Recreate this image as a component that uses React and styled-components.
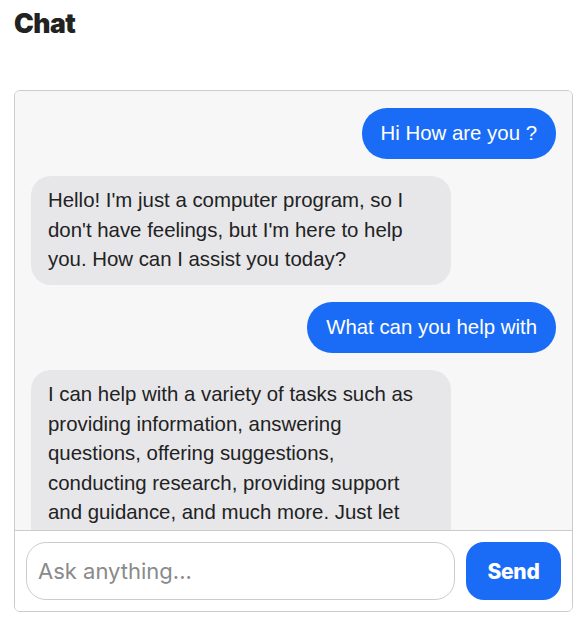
import React from 'react';
import styled, { createGlobalStyle } from 'styled-components';

const GlobalStyle = createGlobalStyle`
  body {
    margin: 0;
    background: #ffffff;
    font-family: "Liberation Sans", Arial, sans-serif;
  }
`;

const Page = styled.div`
  padding: 0 14px;
`;

const Title = styled.h1`
  margin: 0;
  padding-top: 4px;
  height: 90px;
  font-family: Inter, "Liberation Sans", sans-serif;
  font-size: 26.5px;
  font-weight: 900;
  letter-spacing: -0.5px;
  line-height: 38px;
  color: #222;
  box-sizing: border-box;
`;

const ChatBox = styled.div`
  width: 559px;
  height: 522px;
  border: 1px solid #cccccc;
  border-radius: 6px;
  display: flex;
  flex-direction: column;
  overflow: hidden;
  box-sizing: border-box;
`;

const Messages = styled.div`
  flex: 1;
  background: #f7f7f7;
  padding: 17px 16px;
  display: flex;
  flex-direction: column;
  gap: 17px;
  overflow: hidden;
`;

const Bubble = styled.div`
  align-self: ${p => (p.$mine ? 'flex-end' : 'flex-start')};
  max-width: 80%;
  box-sizing: border-box;
  padding: 10.5px 19px 10.5px ${p => (p.$mine ? '19px' : '17px')};
  border-radius: ${p => (p.$mine ? '25px' : '20px')};
  background: ${p => (p.$mine ? '#1a6cf6' : '#e7e7ea')};
  color: ${p => (p.$mine ? '#ffffff' : '#222222')};
  font-size: 20.4px;
  line-height: 29.5px;
  flex-shrink: 0;
`;

const Footer = styled.form`
  display: flex;
  gap: 11px;
  padding: 11px;
  border-top: 1px solid #cccccc;
  background: #ffffff;
`;

const Input = styled.input`
  flex: 1;
  height: 58px;
  box-sizing: border-box;
  border: 1px solid #cccccc;
  border-radius: 20px;
  padding: 0 11px;
  font-family: Inter, "Liberation Sans", sans-serif;
  font-size: 22px;
  outline: none;
  &::placeholder {
    color: #8a8a8a;
  }
`;

const SendButton = styled.button`
  width: 95px;
  height: 58px;
  border: none;
  border-radius: 18px;
  background: #1a6cf6;
  color: #ffffff;
  font-family: Inter, "Liberation Sans", sans-serif;
  font-size: 21px;
  font-weight: 800;
  letter-spacing: -0.3px;
  cursor: pointer;
`;

const messages = [
  { mine: true, text: 'Hi How are you ?' },
  { mine: false, text: "Hello! I'm just a computer program, so I don't have feelings, but I'm here to help you. How can I assist you today?" },
  { mine: true, text: 'What can you help with' },
  { mine: false, text: 'I can help with a variety of tasks such as providing information, answering questions, offering suggestions, conducting research, providing support and guidance, and much more. Just let me know what you need help with and I will do my best to assist you!' },
];

export default function App() {
  return (
    <Page>
      <GlobalStyle />
      <Title>Chat</Title>
      <ChatBox>
        <Messages>
          {messages.map((m, i) => (
            <Bubble key={i} $mine={m.mine}>{m.text}</Bubble>
          ))}
        </Messages>
        <Footer onSubmit={e => e.preventDefault()}>
          <Input placeholder="Ask anything..." />
          <SendButton type="submit">Send</SendButton>
        </Footer>
      </ChatBox>
    </Page>
  );
}
